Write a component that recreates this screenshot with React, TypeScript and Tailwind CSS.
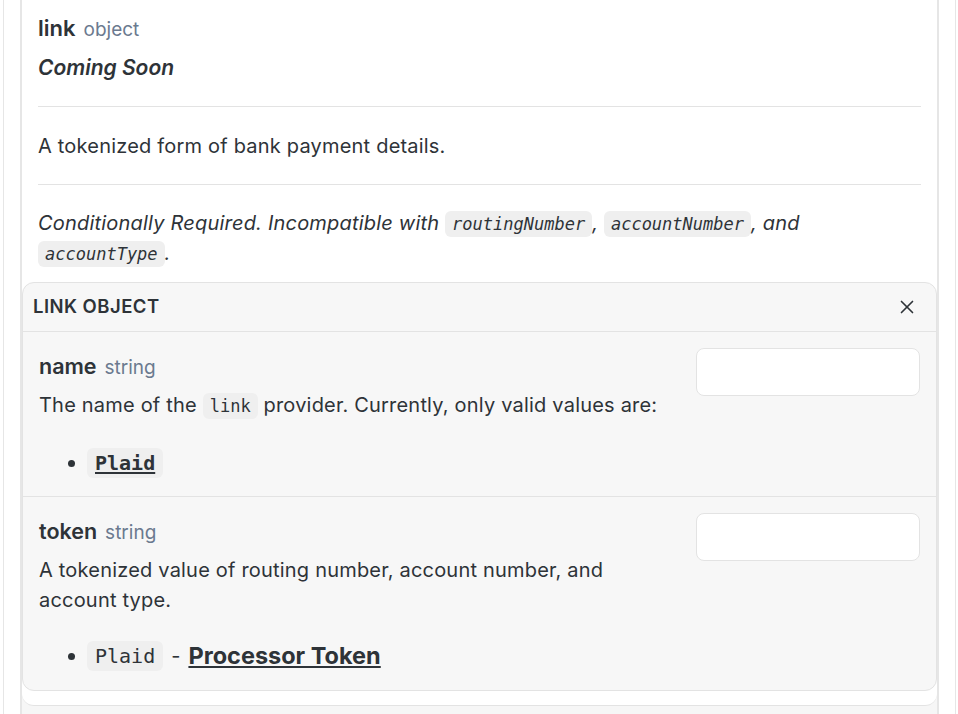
import { X } from 'lucide-react';

const sans = 'font-["Inter",_"Liberation_Sans",_sans-serif]';
const mono = 'font-["DejaVu_Sans_Mono",_"Liberation_Mono",_monospace]';
const body = 'text-[20px] tracking-[0.2px]';

const Code = ({ children, className = '' }: { children: React.ReactNode; className?: string }) => (
    <code className={`${mono} rounded-md bg-[#efefef] px-[7px] py-[3px] text-[17px] tracking-normal ${className}`}>
        {children}
    </code>
);

const Field = ({
    name,
    type,
    children,
    last,
}: {
    name: string;
    type: string;
    children: React.ReactNode;
    last?: boolean;
}) => (
    <div className={`flex items-start gap-4 px-4 pt-4 ${last ? 'pb-[19px]' : 'pb-[18px] border-b border-[#e3e3e3]'}`}>
        <div className="flex-1 pt-[2px]">
            <div className="flex items-baseline gap-2 leading-8">
                <span className="text-[21.5px] font-semibold text-[#2e3338]">{name}</span>
                <span className="text-[19px] text-[#6b7a8f]">{type}</span>
            </div>
            {children}
        </div>
        <input
            type="text"
            className="h-12 w-[224px] shrink-0 rounded-lg border border-[#e3e3e3] bg-white outline-none"
        />
    </div>
);

export default function App() {
    return (
        <div className={`${sans} min-h-screen bg-white text-[#2e3338]`}>
            <div className="ml-[3px] mr-[2px] min-h-screen border-x border-[#e6e6e6] px-4">
                <div className="min-h-screen border-x-2 border-[#e6e6e6] bg-[#f6f6f6]">
                    <div className="rounded-b-xl border-b border-[#e3e3e3] bg-white pb-[14px]">
                        <div className="px-4 pt-3">
                            <div className="flex items-baseline gap-2 leading-8">
                                <span className="text-[22px] font-semibold">link</span>
                                <span className="text-[19px] text-[#6b7a8f]">object</span>
                            </div>
                            <div className="mt-2 text-[21px] font-semibold italic leading-7">Coming Soon</div>
                            <div className="mt-6 h-px bg-[#e3e3e3]" />
                            <p className={`mt-6 ${body} leading-[30px]`}>A tokenized form of bank payment details.</p>
                            <div className="mt-[23px] h-px bg-[#e3e3e3]" />
                            <p className={`mt-6 ${body} italic leading-[29px]`}>
                                Conditionally Required. Incompatible with <Code className="italic">routingNumber</Code>,{' '}
                                <Code className="italic">accountNumber</Code>, and <Code className="italic">accountType</Code>.
                            </p>
                        </div>

                        <div className="mt-[13px] overflow-hidden rounded-xl border border-[#e3e3e3] bg-[#f7f7f7]">
                            <div className="flex h-[49px] items-center justify-between border-b border-[#e3e3e3] pl-[10px] pr-[18px]">
                                <span className="text-[18.5px] font-semibold tracking-wide">LINK OBJECT</span>
                                <X size={22} strokeWidth={1.8} className="text-[#2e3338]" />
                            </div>

                            <Field name="name" type="string">
                                <p className={`mt-[6px] ${body} leading-[30px]`}>
                                    The name of the <Code>link</Code> provider. Currently, only valid values are:
                                </p>
                                <ul className="mt-[27px] pl-[29px]">
                                    <li className="flex items-center gap-3 leading-[30px]">
                                        <span className="h-[7px] w-[7px] rounded-full bg-[#2e3338]" />
                                        <code className={`${mono} rounded-md bg-[#efefef] px-2 text-[20px] font-bold underline underline-offset-2`}>
                                            Plaid
                                        </code>
                                    </li>
                                </ul>
                            </Field>

                            <Field name="token" type="string" last>
                                <p className={`mt-[6px] max-w-[600px] ${body} leading-[30px]`}>
                                    A tokenized value of routing number, account number, and account type.
                                </p>
                                <ul className="mt-[26px] pl-[29px]">
                                    <li className="flex items-center gap-3 leading-[30px]">
                                        <span className="h-[7px] w-[7px] rounded-full bg-[#2e3338]" />
                                        <span className="flex items-center gap-2">
                                            <code className={`${mono} rounded-md bg-[#efefef] px-2 text-[20px]`}>Plaid</code>
                                            <span className="text-[20px]">-</span>
                                            <a className="text-[23.5px] font-bold underline underline-offset-2">Processor Token</a>
                                        </span>
                                    </li>
                                </ul>
                            </Field>
                        </div>
                    </div>
                </div>
            </div>
        </div>
    );
}
